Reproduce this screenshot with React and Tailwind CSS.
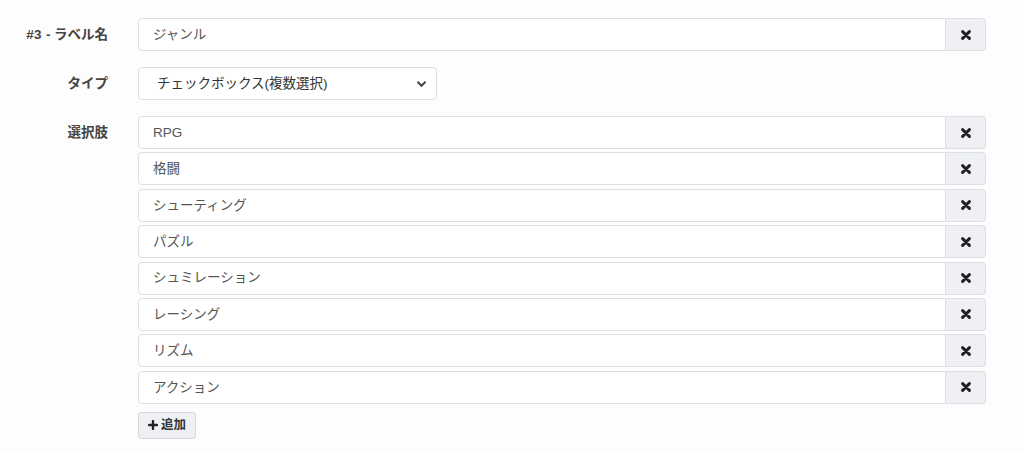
import React from "react";

const options = [
  "RPG",
  "格闘",
  "シューティング",
  "パズル",
  "シュミレーション",
  "レーシング",
  "リズム",
  "アクション",
];

// heavy x like the font awesome "times" glyph
const XIcon = () => (
  <svg width="10" height="10" viewBox="0 0 10 10">
    <path d="M1.6 1.6 L8.4 8.4 M8.4 1.6 L1.6 8.4" stroke="#1f1f1f" strokeWidth="2.9" strokeLinecap="round" />
  </svg>
);

const PlusIcon = () => (
  <svg width="10" height="10" viewBox="0 0 10 10">
    <path d="M5 1 L5 9 M1 5 L9 5" stroke="#222" strokeWidth="2.4" strokeLinecap="round" />
  </svg>
);

// input with the remove button on its right
const InputRow = ({ value }) => (
  <div className="flex h-[33px] w-full">
    <div className="flex-1 flex items-center rounded-l-[4px] border border-[#dcdfe6] bg-white pl-[14px] pt-[1px] text-[13.5px] text-[#555]">
      {value}
    </div>
    <button className="w-[40px] flex items-center justify-center rounded-r-[4px] border border-l-0 border-[#dcdfe6] bg-[#eff0f4]">
      <XIcon />
    </button>
  </div>
);

const Label = ({ children }) => (
  <div className="h-[33px] flex items-center justify-end pt-[1px] text-[13.5px] font-bold text-[#444]">
    {children}
  </div>
);

export default function App() {
  return (
    <div
      className="w-[1024px] h-[451px] bg-[#fdfdfd] pt-[18px]"
      style={{ fontFamily: '"Liberation Sans", "Noto Sans CJK JP", sans-serif' }}
    >
      <div className="grid grid-cols-[108px_848px] gap-x-[30px] gap-y-[16px]">
        <Label>
          <span className="tracking-[0.4px]">#3 - </span>
          <span className="ml-[3px]">ラベル名</span>
        </Label>
        <InputRow value="ジャンル" />

        <Label>タイプ</Label>
        <div className="w-[299px] h-[33px] flex items-center justify-between rounded-[4px] border border-[#dcdfe6] bg-white pl-[18px] pr-[9px] pt-[1px] text-[13.5px] text-[#333]">
          <span>チェックボックス(複数選択)</span>
          <svg width="11" height="8" viewBox="0 0 11 8">
            <path d="M1.5 1.8 L5.5 5.8 L9.5 1.8" fill="none" stroke="#444" strokeWidth="2" />
          </svg>
        </div>

        <div className="self-start">
          <Label>選択肢</Label>
        </div>
        <div className="flex flex-col">
          <div className="flex flex-col gap-[3.4px]">
            {options.map((o) => (
              <InputRow key={o} value={o} />
            ))}
          </div>
          <div className="mt-[8px]">
            <button className="h-[27px] w-[58px] flex items-center justify-center gap-[3px] rounded-[3px] border border-[#d5d8df] bg-[#eef0f4] text-[12.5px] font-bold text-[#333]">
              <PlusIcon />
              追加
            </button>
          </div>
        </div>
      </div>
    </div>
  );
}
